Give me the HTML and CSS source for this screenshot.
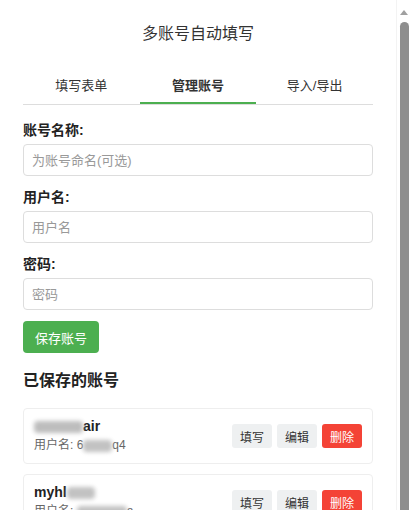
FILE: index.html
```html
<!DOCTYPE html>
<html lang="zh-CN">
<head>
<meta charset="utf-8">
<title>多账号自动填写</title>
<link rel="stylesheet" href="styles.css">
</head>
<body>
<div class="app">
  <h1 class="title">多账号自动填写</h1>
  <div class="tabs">
    <div class="tab">填写表单</div>
    <div class="tab active">管理账号</div>
    <div class="tab">导入/导出</div>
  </div>
  <div class="panel">
    <div class="field">
      <label class="field-label">账号名称:</label>
      <input class="field-input" type="text" placeholder="为账号命名(可选)">
    </div>
    <div class="field">
      <label class="field-label">用户名:</label>
      <input class="field-input" type="text" placeholder="用户名">
    </div>
    <div class="field">
      <label class="field-label">密码:</label>
      <input class="field-input" type="password" placeholder="密码">
    </div>
    <button class="btn-save">保存账号</button>
    <h2 class="section-title">已保存的账号</h2>
    <div class="account-list">
      <div class="account-card">
        <div class="account-info">
          <div class="acc-name"><span class="blur blur-name1"></span>air</div>
          <div class="acc-user">用户名: 6<span class="blur blur-user1"></span>q4</div>
        </div>
        <div class="actions">
          <button class="btn-sm">填写</button>
          <button class="btn-sm">编辑</button>
          <button class="btn-sm btn-del">删除</button>
        </div>
      </div>
      <div class="account-card">
        <div class="account-info">
          <div class="acc-name">myhl<span class="blur blur-name2"></span></div>
          <div class="acc-user">用户名: <span class="blur blur-user2"></span>a</div>
        </div>
        <div class="actions">
          <button class="btn-sm">填写</button>
          <button class="btn-sm">编辑</button>
          <button class="btn-sm btn-del">删除</button>
        </div>
      </div>
    </div>
  </div>
</div>
<div class="scrollbar">
  <span class="scroll-arrow"></span>
  <span class="scroll-thumb"></span>
</div>
</body>
</html>
```
FILE: styles.css
```css
html, body {
  margin: 0;
  height: 100%;
  overflow: hidden;
}
body {
  font-family: "Liberation Sans", "Noto Sans CJK SC", sans-serif;
  color: #333;
  background: #fff;
}
.app {
  width: 350px;
  margin-left: 23px;
  padding-top: 22px;
}
.title {
  margin: 0;
  font-size: 16px;
  line-height: 24px;
  font-weight: normal;
  text-align: center;
  color: #333;
}
.tabs {
  display: flex;
  margin-top: 22px;
  border-bottom: 1px solid #ddd;
}
.tab {
  flex: 1;
  text-align: center;
  font-size: 13px;
  line-height: 20px;
  padding: 8px 0 6px;
  border-bottom: 2px solid transparent;
  color: #333;
}
.tab.active {
  border-bottom-color: #4caf50;
  font-weight: bold;
}
.panel {
  padding-top: 15px;
}
.field {
  margin-bottom: 11px;
}
.field-label {
  display: block;
  font-size: 14px;
  line-height: 20px;
  font-weight: bold;
  color: #222;
  margin-bottom: 4px;
}
.field-input {
  display: block;
  box-sizing: border-box;
  width: 100%;
  height: 32px;
  border: 1px solid #ddd;
  border-radius: 4px;
  padding: 0 8px;
  font-family: inherit;
  font-size: 13px;
  color: #333;
  outline: none;
}
.field-input::placeholder {
  color: #999;
}
.btn-save {
  display: block;
  height: 32px;
  padding: 0 12px;
  border: none;
  border-radius: 4px;
  background: #4caf50;
  color: #fff;
  font-family: inherit;
  font-size: 13px;
}
.section-title {
  margin: 17px 0 16px;
  font-size: 16px;
  line-height: 22px;
  font-weight: bold;
  color: #222;
}
.account-card {
  display: flex;
  align-items: center;
  justify-content: space-between;
  border: 1px solid #eee;
  border-radius: 4px;
  padding: 9px 10px;
  margin-bottom: 10px;
}
.acc-name {
  font-size: 14px;
  line-height: 17px;
  font-weight: bold;
  color: #222;
}
.acc-user {
  margin-top: 2px;
  font-size: 12px;
  line-height: 17px;
  color: #666;
}
.blur {
  display: inline-block;
  vertical-align: middle;
  height: 12px;
  border-radius: 4px;
  background: #c2c2c2;
  filter: blur(2px);
}
.blur-name1 { width: 49px; background: #bdbdbd; }
.blur-user1 { width: 29px; }
.blur-name2 { width: 28px; }
.blur-user2 { width: 50px; }
.actions {
  display: flex;
  gap: 5px;
}
.btn-sm {
  height: 24px;
  padding: 0 8px;
  border: none;
  border-radius: 3px;
  background: #eef0f1;
  color: #333;
  font-family: inherit;
  font-size: 12px;
}
.btn-del {
  background: #f44336;
  color: #fff;
}
.scrollbar {
  position: fixed;
  top: 0;
  right: 0;
  bottom: 0;
  width: 14px;
  border-left: 1px solid #f3f3f3;
  background: #fff;
}
.scroll-arrow {
  position: absolute;
  top: 10px;
  left: 3px;
  width: 0;
  height: 0;
  border-left: 4px solid transparent;
  border-right: 4px solid transparent;
  border-bottom: 5px solid #a0a0a0;
}
.scroll-thumb {
  position: absolute;
  top: 22px;
  bottom: 0;
  left: 3px;
  width: 9px;
  border-radius: 5px 5px 0 0;
  background: #8e8e8e;
}
```
